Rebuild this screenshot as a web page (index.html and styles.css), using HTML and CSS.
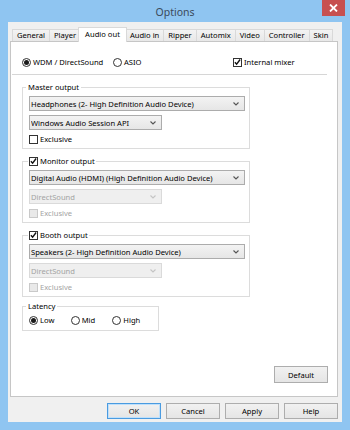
FILE: index.html
```html
<!DOCTYPE html>
<html>
<head>
<meta charset="utf-8">
<title>Options</title>
<link rel="stylesheet" href="styles.css">
</head>
<body>
<div class="window">
  <div class="titlebar">
    <span class="title">Options</span>
    <span class="close"><svg width="9" height="8" viewBox="0 0 9 8"><path d="M1 0.5 L8 7.5 M8 0.5 L1 7.5" stroke="#fff" stroke-width="1.8"/></svg></span>
  </div>
  <div class="client">
    <div class="tabs">
      <div class="tab">General</div>
      <div class="tab">Player</div>
      <div class="tab active">Audio out</div>
      <div class="tab">Audio in</div>
      <div class="tab">Ripper</div>
      <div class="tab">Automix</div>
      <div class="tab">Video</div>
      <div class="tab">Controller</div>
      <div class="tab">Skin</div>
    </div>
    <div class="panel">
      <div class="toprow">
        <div class="opt wdm"><span class="radio on"></span>WDM / DirectSound</div>
        <div class="opt"><span class="radio"></span>ASIO</div>
        <div class="opt mixer"><span class="check on"><svg width="8" height="8" viewBox="0 0 8 8"><path d="M1 4.2 L3 6.4 L7 1.2" fill="none" stroke="#111" stroke-width="1.6"/></svg></span>Internal mixer</div>
      </div>
      <div class="sep"></div>

      <fieldset class="group out">
        <legend>Master output</legend>
        <div class="select wide"><span class="val">Headphones (2- High Definition Audio Device)</span><svg class="chev" width="6" height="4" viewBox="0 0 6 4"><path d="M0.5 0.5 L3 3 L5.5 0.5" fill="none" stroke="#555" stroke-width="1.1"/></svg></div>
        <div class="select narrow"><span class="val">Windows Audio Session API</span><svg class="chev" width="6" height="4" viewBox="0 0 6 4"><path d="M0.5 0.5 L3 3 L5.5 0.5" fill="none" stroke="#555" stroke-width="1.1"/></svg></div>
        <div class="opt excl"><span class="check"></span>Exclusive</div>
      </fieldset>

      <fieldset class="group out">
        <legend class="chk-legend"><span class="check on"><svg width="8" height="8" viewBox="0 0 8 8"><path d="M1 4.2 L3 6.4 L7 1.2" fill="none" stroke="#111" stroke-width="1.6"/></svg></span>Monitor output</legend>
        <div class="select wide"><span class="val">Digital Audio (HDMI) (High Definition Audio Device)</span><svg class="chev" width="6" height="4" viewBox="0 0 6 4"><path d="M0.5 0.5 L3 3 L5.5 0.5" fill="none" stroke="#555" stroke-width="1.1"/></svg></div>
        <div class="select narrow disabled"><span class="val">DirectSound</span><svg class="chev" width="6" height="4" viewBox="0 0 6 4"><path d="M0.5 0.5 L3 3 L5.5 0.5" fill="none" stroke="#c4c4c4" stroke-width="1.1"/></svg></div>
        <div class="opt excl disabled"><span class="check"></span>Exclusive</div>
      </fieldset>

      <fieldset class="group out">
        <legend class="chk-legend"><span class="check on"><svg width="8" height="8" viewBox="0 0 8 8"><path d="M1 4.2 L3 6.4 L7 1.2" fill="none" stroke="#111" stroke-width="1.6"/></svg></span>Booth output</legend>
        <div class="select wide"><span class="val">Speakers (2- High Definition Audio Device)</span><svg class="chev" width="6" height="4" viewBox="0 0 6 4"><path d="M0.5 0.5 L3 3 L5.5 0.5" fill="none" stroke="#555" stroke-width="1.1"/></svg></div>
        <div class="select narrow disabled"><span class="val">DirectSound</span><svg class="chev" width="6" height="4" viewBox="0 0 6 4"><path d="M0.5 0.5 L3 3 L5.5 0.5" fill="none" stroke="#c4c4c4" stroke-width="1.1"/></svg></div>
        <div class="opt excl disabled"><span class="check"></span>Exclusive</div>
      </fieldset>

      <fieldset class="group latency">
        <legend>Latency</legend>
        <div class="radios">
          <div class="opt lat"><span class="radio on"></span>Low</div>
          <div class="opt lat"><span class="radio"></span>Mid</div>
          <div class="opt lat"><span class="radio"></span>High</div>
        </div>
      </fieldset>

      <div class="panel-foot">
        <div class="btn">Default</div>
      </div>
    </div>
    <div class="buttons">
      <div class="btn default">OK</div>
      <div class="btn">Cancel</div>
      <div class="btn">Apply</div>
      <div class="btn">Help</div>
    </div>
  </div>
</div>
</body>
</html>
```

FILE: styles.css
```css
* { box-sizing: border-box; }

body {
  margin: 0;
  background: #8fc5f1;
  font-family: "Noto Sans", "Open Sans", sans-serif;
  font-size: 7.6px;
  color: #000;
}

.window {
  width: 350px;
  height: 430px;
  background: #8fc5f1;
  display: flex;
  flex-direction: column;
  position: relative;
}

.titlebar {
  height: 22px;
  display: flex;
  align-items: center;
  justify-content: center;
}

.title {
  font-size: 10.5px;
  color: #3b4a5b;
  margin-top: 1px;
}

.close {
  position: absolute;
  top: 0;
  right: 5px;
  width: 23px;
  height: 16px;
  background: #c75050;
  display: flex;
  align-items: center;
  justify-content: center;
}

.client {
  margin: 0 8px;
  height: 400px;
  background: #f0f0f0;
  padding: 5px 4px 0 2px;
  display: flex;
  flex-direction: column;
}

/* tabs */
.tabs {
  display: flex;
  align-items: flex-end;
  height: 14px;
  padding-left: 2px;
  position: relative;
  z-index: 1;
}

.tab {
  height: 12px;
  padding: 0 4px;
  border: 1px solid #d9d9d9;
  border-bottom: none;
  margin-right: -1px;
  background: linear-gradient(#f3f3f3, #e8e8e8);
  line-height: 11px;
  white-space: nowrap;
}

.tab.active {
  height: 15px;
  background: #fff;
  margin: 0 -2px -1px -2px;
  padding: 0 6px;
  line-height: 13px;
  position: relative;
  z-index: 2;
}

/* panel */
.panel {
  height: 356px;
  border: 1px solid #c6c6c6;
  background: #fff;
  padding: 14px 10px 13px 11px;
  display: flex;
  flex-direction: column;
}

.opt {
  display: flex;
  align-items: center;
  gap: 2px;
  height: 12px;
  white-space: nowrap;
}

.radio {
  width: 9px;
  height: 9px;
  border: 1px solid #333;
  border-radius: 50%;
  background: #fff;
  display: flex;
  align-items: center;
  justify-content: center;
  flex: none;
}

.radio.on::after {
  content: "";
  width: 5px;
  height: 5px;
  border-radius: 50%;
  background: #1a1a1a;
}

.check {
  width: 9px;
  height: 9px;
  border: 1px solid #333;
  background: #fff;
  display: flex;
  align-items: center;
  justify-content: center;
  flex: none;
}

.toprow {
  display: flex;
  height: 12px;
}

.toprow .wdm { width: 91px; }
.toprow .mixer { margin-left: auto; width: 94px; }

.sep {
  height: 1px;
  background: #d6d6d6;
  margin: 6px 0 0 -10px;
}

fieldset.group {
  margin: 6px 0 0;
  min-width: 0;
  border: 1px solid #dcdcdc;
  display: flex;
  flex-direction: column;
}

fieldset.out {
  width: 228px;
  padding: 3px 4px 3px 6px;
}

legend {
  padding: 0 2px;
  margin-left: -3px;
  height: 12px;
  line-height: 12px;
  display: flex;
  align-items: center;
  gap: 2px;
}

legend.chk-legend {
  padding: 0 1px;
  margin-left: -1px;
}

.select {
  height: 15px;
  border: 1px solid #acacac;
  background: linear-gradient(#f3f3f3, #e6e6e6);
  display: flex;
  align-items: center;
  padding: 0 5px 0 1px;
  white-space: nowrap;
  margin-bottom: 4px;
}

.select .val { flex: 1; overflow: hidden; }
.select .chev { flex: none; }

.select.wide { width: 216px; }
.select.narrow { width: 133px; }

.select.disabled {
  border-color: #dadada;
  background: #efefef;
  color: #a3a3a3;
}

.excl { margin-top: -1px; }

.opt.disabled { color: #a3a3a3; }
.opt.disabled .check {
  border-color: #c9c9c9;
  background: #e9e9e9;
}

fieldset.latency {
  margin-top: 3px;
  width: 137px;
  padding: 2px 4px 4px 6px;
}

.radios {
  display: flex;
}

.lat { width: 44px; }

.panel-foot {
  margin-top: auto;
  display: flex;
  justify-content: flex-end;
  margin-right: -1px;
}

.btn {
  width: 54px;
  height: 16px;
  border: 1px solid #adadad;
  background: linear-gradient(#f1f1f1, #e5e5e5);
  display: flex;
  align-items: center;
  justify-content: center;
}

.panel-foot .btn { height: 17px; }

.btn.default {
  border-color: #4a9be0;
  box-shadow: inset 0 0 0 1px #bfe0fb;
}

.buttons {
  display: flex;
  justify-content: flex-end;
  gap: 5px;
  margin-top: 6px;
}
```
